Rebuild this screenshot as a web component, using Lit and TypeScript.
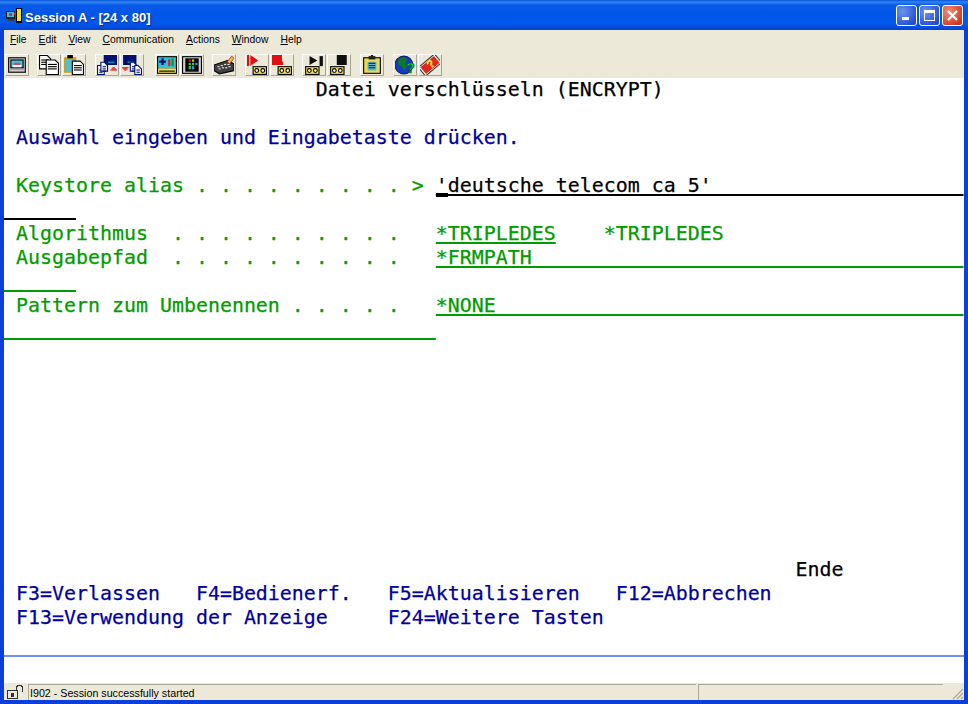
import { LitElement, html, css, svg } from "lit";
import { customElement } from "lit/decorators.js";

const K = "#000", R = "#e01010", W = "#fff", G = "#808080", C = "#00b8d0", N = "#001070", D = "#202020";

function r(x: number, y: number, w: number, h: number, f: string) {
  return svg`<rect x=${x} y=${y} width=${w} height=${h} fill=${f} />`;
}
function icon(body: unknown) {
  return html`<svg class="ic" width="20" height="20" viewBox="0 0 18 18">${body}</svg>`;
}
const doc = (x: number, y: number, w: number, h: number, fill = W, line = K) => svg`
  <path d="M${x + .5} ${y + .5}h${w - 4}l3 3v${h - 4}h-${w - 1}z" fill=${fill} stroke=${line} />
  ${r(x + 2, y + 4, w - 4, 1, line)}${r(x + 2, y + 6, w - 4, 1, line)}${r(x + 2, y + 8, w - 4, 1, line)}`;
const tape = (x: number, y: number) => svg`
  ${r(x, y, 13, 8, K)}${r(x + 1, y + 1, 11, 6, "#f8e050")}
  <circle cx=${x + 3.8} cy=${y + 4} r="1.7" fill="#fff8c0" stroke=${K} stroke-width="1" />
  <circle cx=${x + 9.2} cy=${y + 4} r="1.7" fill="#fff8c0" stroke=${K} stroke-width="1" />`;
const screen = (x: number, y: number) => svg`${r(x, y, 12, 9, N)}${r(x + 4, y + 6, 6, 1, C)}`;

const icons = [
  icon(svg`${r(1, 2, 16, 14, K)}${r(2, 3, 14, 12, "#c8c8c8")}${r(3, 4, 12, 8, K)}${r(4, 5, 10, 6, "#40c8e0")}${r(6, 7, 6, 3, "#e04060")}${r(5, 9, 8, 2, W)}${r(3, 12, 12, 1, G)}`),
  icon(svg`${doc(0, 0, 11, 13)}${doc(6, 4, 12, 14)}`),
  icon(svg`${r(0, 2, 11, 14, "#c8a020")}${r(1, 4, 9, 11, "#50c0d0")}${r(3, 0, 5, 3, K)}${doc(7, 5, 11, 13)}`),
  icon(svg`${screen(6, 0)}${r(12, 13, 6, 1, R)}${r(13, 12, 4, 1, R)}${r(14, 11, 2, 1, R)}${doc(0, 9, 7, 9, W, N)}${doc(3, 6, 7, 9, W, N)}`),
  icon(svg`${screen(1, 0)}${r(0, 11, 6, 1, R)}${r(1, 12, 4, 1, R)}${r(2, 13, 2, 1, R)}${doc(7, 6, 7, 9, W, N)}${doc(11, 9, 7, 9, W, N)}`),
  icon(svg`${r(0, 1, 18, 16, K)}${r(1, 2, 16, 10, "#30c0d8")}${r(2, 5, 6, 2, N)}${r(4, 3, 2, 6, N)}${r(10, 4, 2, 6, "#e02020")}${r(13, 3, 2, 7, "#209020")}${r(1, 12, 16, 4, "#f0e060")}${r(2, 14, 14, 1, K)}`),
  icon(svg`${r(0, 1, 18, 16, K)}${r(1, 2, 16, 14, "#d0d0d0")}${r(3, 3, 12, 12, K)}${r(6, 4, 2, 2, "#e02020")}${r(9, 4, 2, 2, "#e0c020")}${r(6, 7, 2, 2, "#30d040")}${r(9, 7, 2, 2, "#30d040")}${r(12, 7, 2, 2, "#20a0e0")}${r(6, 10, 2, 3, "#30d040")}${r(9, 10, 2, 3, "#20a0e0")}`),
  icon(svg`<path d="M0 9 L12 5 L18 8 L18 14 L5 17 L0 14z" fill="#404040" stroke="#000" />
    ${r(3, 10, 2, 1, "#ddd")}${r(6, 9, 2, 1, "#ddd")}${r(9, 8, 2, 1, "#ddd")}${r(12, 8, 2, 1, "#ddd")}${r(4, 12, 2, 1, "#ddd")}${r(7, 11, 2, 1, "#ddd")}${r(10, 11, 2, 1, "#ddd")}${r(13, 10, 2, 1, "#ddd")}
    <path d="M12 6 L16 1 L18 3 L14 8z" fill="#f0c040" stroke="#a02020" stroke-width=".7" />`),
  icon(svg`<path d="M0 0h2v10h-2z" fill="#e01010"/><path d="M3 0 L10 5 L3 10z" fill="#e01010"/>${tape(5, 10)}`),
  icon(svg`${r(0, 0, 9, 9, R)}${r(8, 6, 2, 3, R)}${tape(5, 10)}`),
  icon(svg`<path d="M5 1 L12 5 L5 9z" fill="#101010"/>${r(14, 1, 3, 9, "#101010")}${tape(1, 10)}`),
  icon(svg`${r(7, 0, 9, 9, "#101010")}${tape(1, 10)}`),
  icon(svg`${r(1, 2, 16, 15, K)}${r(2, 3, 14, 13, "#f0d850")}${r(6, 1, 6, 3, D)}${r(8, 0, 2, 2, D)}${r(5, 6, 8, 8, "#50c0d0")}${r(6, 7, 6, 1, N)}${r(6, 9, 6, 1, N)}${r(6, 11, 6, 1, N)}`),
  icon(svg`<circle cx="8" cy="9" r="8" fill="#1040c0" stroke="#102060" />
    <path d="M3 4 L8 2 L11 4 L9 8 L11 11 L8 14 L6 10 L3 9z" fill="#107828" />
    <text x="10" y="16" font-family="Liberation Sans" font-weight="700" font-size="13" fill="#20e040" stroke="#005010" stroke-width=".6">?</text>`),
  icon(svg`<g transform="rotate(-40 9 9)"><rect x="-.5" y="4" width="19" height="10" fill="#fff" stroke="#303030" /><rect x="1" y="5" width="16" height="8" fill="#e02818" />
    <text x="7" y="12" font-family="Liberation Sans" font-weight="700" font-size="10" fill="#f8e040" stroke="#f8e040" stroke-width=".3">?</text></g>`),
];

const groups: { at: number; n: number }[] = [
  { at: 5, n: 1 }, { at: 8, n: 2 }, { at: 9, n: 2 }, { at: 11, n: 2 }, { at: 8, n: 1 },
  { at: 9, n: 2 }, { at: 8, n: 2 }, { at: 9, n: 1 }, { at: 9, n: 2 },
];

const menus: [string, string][] = [
  ["F", "ile"], ["E", "dit"], ["V", "iew"], ["C", "ommunication"], ["A", "ctions"], ["W", "indow"], ["H", "elp"],
];

@customElement("app-root")
export class AppRoot extends LitElement {
  static styles = css`
    :host { display: block; width: 968px; height: 704px; overflow: hidden; }
    .win { width: 968px; height: 704px; display: flex; flex-direction: column; background: #0a3fdc; }
    .title { height: 30px; flex: none; display: flex; align-items: center; padding: 4px 5px 0 6px; box-sizing: border-box;
      background: linear-gradient(#0a54d8 0, #2f86f2 2px, #0a5ae8 5px, #0156e6 13px, #0058ee 22px, #0250e0 27px, #0a3fcc 30px);
      color: #fff; font: bold 13px "Liberation Sans", sans-serif; text-shadow: 1px 1px 1px #0a2a90; }
    .appicon { margin-right: 0; margin-top: -3px; }
    .spacer { flex: 1; }
    .wbs { display: flex; gap: 2px; margin-top: -4px; }
    .wb { width: 21px; height: 21px; box-sizing: border-box; border: 1px solid #fff; border-radius: 3px; display: flex;
      align-items: center; justify-content: center; background: radial-gradient(circle at 30% 30%, #6e93ee, #2a56d8 70%, #1c40c0); }
    .wb.close { background: radial-gradient(circle at 30% 30%, #ee9078, #d8482c 65%, #b83010); }
    .body { flex: 1; margin: 0 4px 4px; display: flex; flex-direction: column; min-height: 0; background: #ece9d8; }
    .menu { height: 21px; flex: none; display: flex; align-items: center; gap: 12px; padding: 0 0 3px 6px; box-sizing: border-box; font: 10.3px "Liberation Sans", sans-serif; color: #000; }
    .menu u { text-underline-offset: 1px; }
    .tools { height: 27px; flex: none; display: flex; align-items: flex-start; padding-top: 3px; box-sizing: border-box; }
    .group { display: flex; gap: 1px; }
    .btn { width: 24px; height: 22px; box-sizing: border-box; border: 1px solid; border-color: #fff #a8a494 #a8a494 #fff; display: flex; align-items: center; justify-content: center; }
    .ic { display: block; flex: none; }
    .term { flex: 1; min-height: 0; background: #fff; font: 19.93px "DejaVu Sans Mono", monospace; -webkit-text-stroke: .25px currentColor; white-space: pre; line-height: 24px; display: flex; flex-direction: column; }
    .row { height: 24px; flex: none; }
    .sep { margin-top: 1px; height: 2px; background: #7090f0; flex: none; }
    .b { color: #00009c; }
    .g { color: #009c00; }
    .k { color: #000; }
    .u { text-decoration: underline; text-decoration-thickness: 2px; text-underline-offset: 2px; text-decoration-skip-ink: none; }
    .cur { position: relative; }
    .cur::after { content: ""; position: absolute; left: 0; width: 12px; height: 4px; bottom: 0; background: #000; }
    .status { height: 17px; flex: none; display: flex; box-sizing: border-box; font: 10.7px "Liberation Sans", sans-serif; color: #000; padding-top: 1px; position: relative; }
    .cell { box-sizing: border-box; border-top: 1px solid #aca899; border-left: 1px solid #aca899; display: flex; align-items: center; overflow: hidden; }
    .lock { width: 24px; border: none; justify-content: center; }
    .msg { width: 668px; padding-left: 1px; }
    .mid { width: 2px; border: none; }
    .rest { width: 245px; }
    .grip { flex: 1; display: flex; justify-content: flex-end; align-items: flex-end; }
  `;

  private underline(n: number, cls: string, text = "") {
    return html`<span class="u ${cls}">${text.padEnd(n, " ")}</span>`;
  }

  render() {
    let n = 0;
    return html`<div class="win">
      <div class="title">
        <svg class="appicon" width="19" height="16" viewBox="0 0 19 16" shape-rendering="crispEdges">
          ${r(0, 3, 9, 8, "#202020")}${r(1, 4, 7, 5, "#40c0e0")}${r(3, 5, 3, 3, "#e02060")}${r(2, 11, 6, 2, "#404040")}
          ${r(10, 0, 6, 15, "#000")}${r(11, 1, 4, 12, "#f8e020")}${r(8, 5, 2, 2, "#e02020")}
        </svg>
        <span>Session A - [24 x 80]</span>
        <span class="spacer"></span>
        <div class="wbs">
          <div class="wb"><svg width="15" height="15" shape-rendering="crispEdges">${r(3, 9, 7, 3, "#fff")}</svg></div>
          <div class="wb"><svg width="15" height="15" shape-rendering="crispEdges"><path d="M2.5 2.5h10v10h-10z" fill="none" stroke="#fff" />${r(2, 2, 11, 3, "#fff")}</svg></div>
          <div class="wb close"><svg width="15" height="15"><path d="M3 3L12 12M12 3L3 12" stroke="#fff" stroke-width="2.2" /></svg></div>
        </div>
      </div>
      <div class="body">
        <div class="menu">${menus.map(([a, b]) => html`<span><u>${a}</u>${b}</span>`)}</div>
        <div class="tools">
          ${groups.map((g, gi) => html`<div class="group" style="margin-left:${gi === 0 ? 1 : g.at}px">
            ${Array.from({ length: g.n }, () => html`<div class="btn">${icons[n++]}</div>`)}
          </div>`)}
        </div>
        <div class="term">
          <div class="row k">                          Datei verschlüsseln (ENCRYPT)</div>
          <div class="row"></div>
          <div class="row b"> Auswahl eingeben und Eingabetaste drücken.</div>
          <div class="row"></div>
          <div class="row g"> Keystore alias . . . . . . . . . &gt; <span class="u k"><span class="cur">'</span>${"deutsche telecom ca 5'".padEnd(43, " ")}</span></div>
          <div class="row">${this.underline(6, "k")}</div>
          <div class="row g"> Algorithmus  . . . . . . . . . .   ${this.underline(10, "g", "*TRIPLEDES")}    *TRIPLEDES</div>
          <div class="row g"> Ausgabepfad  . . . . . . . . . .   ${this.underline(44, "g", "*FRMPATH")}</div>
          <div class="row">${this.underline(6, "g")}</div>
          <div class="row g"> Pattern zum Umbenennen . . . . .   ${this.underline(44, "g", "*NONE")}</div>
          <div class="row">${this.underline(36, "g")}</div>
          ${Array.from({ length: 9 }, () => html`<div class="row"></div>`)}
          <div class="row k">${" ".repeat(66)}Ende</div>
          <div class="row b"> F3=Verlassen   F4=Bedienerf.   F5=Aktualisieren   F12=Abbrechen</div>
          <div class="row b"> F13=Verwendung der Anzeige     F24=Weitere Tasten</div>
          <div class="row"></div>
          <div class="sep"></div>
        </div>
        <div class="status">
          <div class="cell lock">
            <svg width="18" height="15" viewBox="0 0 18 15" shape-rendering="crispEdges">
              ${r(0, 5, 11, 9, "#303030")}${r(1, 6, 9, 7, "#ece9d8")}${r(4, 8, 3, 4, "#303030")}
              <path d="M9.5 5.5V2.5Q9.5 .5 12.5 .5T15.5 2.5V7" fill="none" stroke="#303030" />
            </svg>
          </div>
          <div class="cell msg">I902 - Session successfully started</div>
          <div class="mid"></div>
          <div class="cell rest"></div>
          <div class="grip">
            <svg width="14" height="14"><path d="M13 3L3 13M13 7L7 13M13 11L11 13" stroke="#aca899" stroke-width="1.2" /></svg>
          </div>
        </div>
      </div>
    </div>`;
  }
}
